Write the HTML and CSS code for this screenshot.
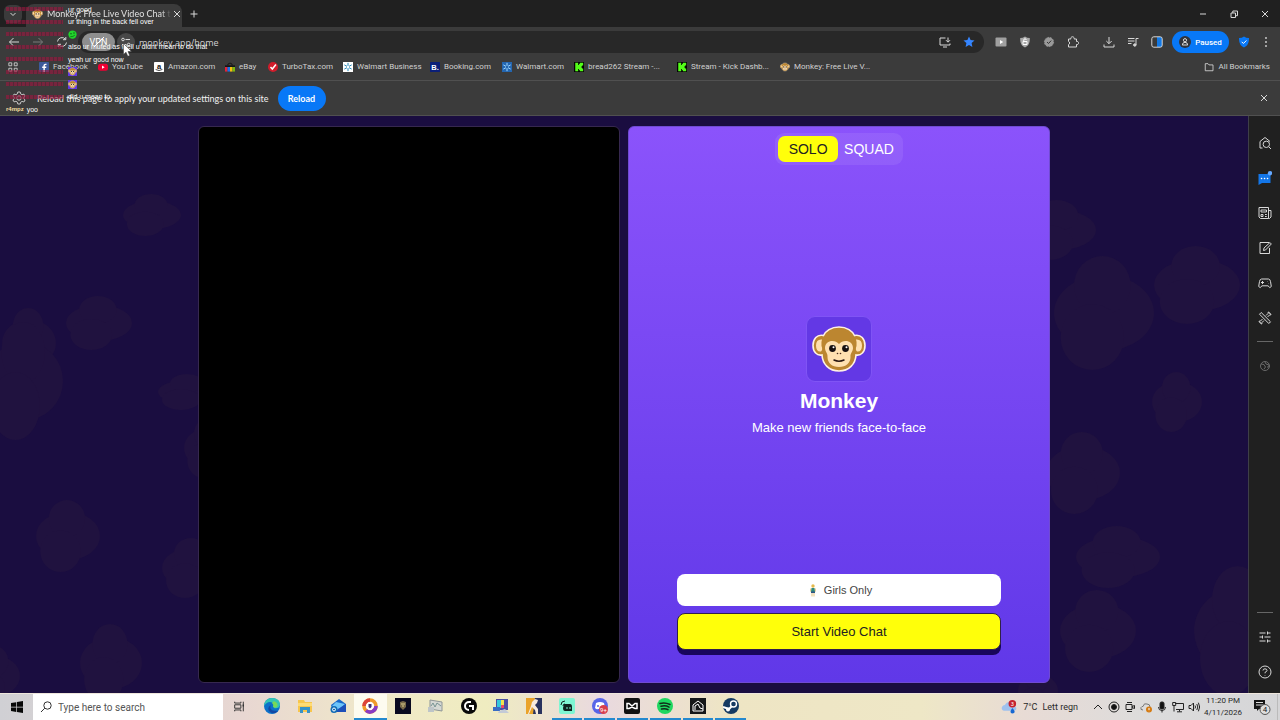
FILE: index.html
```html
<!DOCTYPE html>
<html lang="en">
<head>
    <meta charset="UTF-8">
    <meta name="viewport" content="width=device-width, initial-scale=1.0">
    <title>Monkey: Free Live Video Chat</title>
    <link rel="stylesheet" href="styles.css">
</head>
<body>

    <!-- shared symbols -->
    <svg class="defs" aria-hidden="true">
        <symbol id="monkey" viewBox="0 0 54 46">
            <path d="M27 1C19 1 13.500 5 11.500 9.500C5 8 1 13 1 19.500C1 26 5 30 10 29C10.500 38 17 45 27 45C37 45 43.500 38 44 29C49 30 53 26 53 19.500C53 13 49 8 42.500 9.500C40.500 5 35 1 27 1Z" fill="#bc8630" stroke="#fff1e4" stroke-width="1.600"/>
            <path d="M10 13.500Q4 13 4 19.500T9 25.500Q11 24 9.500 20Q9 16 10 13.500Z" fill="#ffe0b0"/>
            <path d="M44 13.500Q50 13 50 19.500T45 25.500Q43 24 44.500 20Q45 16 44 13.500Z" fill="#ffe0b0"/>
            <path d="M27 18C23 13 13 14 13 22C13 26 16 27 15.500 31C15.500 37 20 41 27 41C34 41 38.500 37 38.500 31C38 27 41 26 41 22C41 14 31 13 27 18Z" fill="#ffe0b0"/>
            <circle cx="20.500" cy="22.500" r="3.400" fill="#171010"/>
            <circle cx="33.500" cy="22.500" r="3.400" fill="#171010"/>
            <circle cx="21.500" cy="21.300" r="1" fill="#fff"/>
            <circle cx="34.500" cy="21.300" r="1" fill="#fff"/>
            <circle cx="25.500" cy="27.500" r=".8" fill="#4a2c1c"/>
            <circle cx="28.500" cy="27.500" r=".8" fill="#4a2c1c"/>
            <path d="M22 34Q27 36.500 32 34" fill="none" stroke="#2a1712" stroke-width="1.500" stroke-linecap="round"/>
        </symbol>
        <symbol id="close" viewBox="0 0 12 12"><path d="M3 3l6 6M9 3l-6 6"/></symbol>
        <symbol id="kick" viewBox="0 0 12 12">
            <rect width="12" height="12" fill="#050505"/>
            <path d="M1.500 1h3.500v2.500h1V2.200h1.200V1H11v3.300H9.700v1H8.700v1.400h1v1H11V11H7.200V9.800H6V8.500H5V11H1.500Z" fill="#53fc18"/>
        </symbol>
        <symbol id="spark" viewBox="0 0 12 12">
            <path d="M6 1.500v2.700M6 7.800v2.700M2 3.700L4.400 5M7.600 7L10 8.300M2 8.300L4.400 7M7.600 5L10 3.700" fill="none" stroke-width="1.200" stroke-linecap="round"/>
        </symbol>
        <symbol id="blob" viewBox="0 0 60 66" preserveAspectRatio="none">
            <ellipse cx="30" cy="33" rx="30" ry="22"/>
            <circle cx="29" cy="17" r="17"/>
            <circle cx="23" cy="47" r="19"/>
        </symbol>
    </svg>

    <header class="tab-strip">
        <button class="tab-search" aria-label="Search tabs"><svg viewBox="0 0 12 12"><path d="M3.500 5L6 7.500L8.500 5"/></svg></button>
        <div class="tab">
            <svg class="favicon"><use href="#monkey"/></svg>
            <span class="tab-title">Monkey: Free Live Video Chat t</span>
            <button aria-label="Close tab"><svg><use href="#close"/></svg></button>
        </div>
        <button class="new-tab" aria-label="New tab"><svg viewBox="0 0 12 12"><path d="M6 2.500v7M2.500 6h7"/></svg></button>
        <div class="window-buttons">
            <button aria-label="Minimize"><svg viewBox="0 0 12 12"><path d="M3 6h6"/></svg></button>
            <button aria-label="Restore"><svg viewBox="0 0 12 12"><path d="M3 5h4.500v4.500H3ZM4.800 5V3h4.700v4.700H7.500"/></svg></button>
            <button aria-label="Close"><svg><use href="#close"/></svg></button>
        </div>
    </header>

    <nav class="toolbar">
        <button aria-label="Back"><svg viewBox="0 0 12 12"><path d="M11 6H1.500M5.500 2L1.500 6l4 4"/></svg></button>
        <button class="disabled" aria-label="Forward"><svg viewBox="0 0 12 12"><path d="M1 6h9.500M6.500 2l4 4l-4 4"/></svg></button>
        <button aria-label="Reload"><svg viewBox="0 0 12 12"><path d="M1.500 5.500A4.500 4.500 0 0 1 9.500 3.300M9.800 1v2.700H7M10.500 6.500A4.500 4.500 0 0 1 2.500 8.700M2.200 11V8.300H5"/></svg></button>
        <div class="omnibox">
            <button class="vpn">VPN<svg viewBox="0 0 12 12"><path d="M1 11L11 1"/></svg></button>
            <button class="site-info" aria-label="Site information"><svg viewBox="0 0 12 12"><path d="M5.500 3.500H10M2 8.500h4.500"/><circle cx="3" cy="3.500" r="1.300"/><circle cx="8.700" cy="8.500" r="1.300"/></svg></button>
            <input type="text" aria-label="Address" value="monkey.app/home">
            <button aria-label="Install"><svg viewBox="0 0 12 12"><path d="M6.500 2H1v7h10V7.500M4 11h4M9 1.500v4.500M7 4.200L9 6.200l2-2"/></svg></button>
            <button aria-label="Bookmark"><svg viewBox="0 0 12 12"><path d="M6 .5l1.600 3.600l3.900.4l-2.900 2.600l.8 3.900L6 9l-3.400 2l.8-3.900L.5 4.500l3.900-.4Z" fill="#3585ff" stroke="none"/></svg></button>
        </div>
        <div class="extensions">
            <button aria-label="Video"><svg viewBox="0 0 12 12"><rect x=".5" y="1.500" width="11" height="9" rx="1" fill="#a0a0a0" stroke="none"/><path d="M5 4l3.200 2L5 8Z" fill="#fff" stroke="none"/></svg></button>
            <button aria-label="Ad blocker"><svg viewBox="0 0 12 12"><path d="M6 .5Q8 2 10.800 2C11 7 9.500 10 6 11.500C2.500 10 1 7 1.200 2Q4 2 6 .5Z" fill="#a8a8a8" stroke="none"/><path d="M4 5.500h4V8.500H4ZM4.800 5.500V4a1.200 1.200 0 0 1 2.400 0" stroke="#fff"/></svg></button>
            <button aria-label="Verified"><svg viewBox="0 0 12 12"><circle cx="6" cy="6" r="4.600" fill="#999" stroke="#999" stroke-dasharray="1.600 1.200"/><path d="M4 6l1.500 1.500L8.200 4.600" stroke="#333"/></svg></button>
            <button aria-label="Extensions"><svg viewBox="0 0 12 12"><path d="M1.500 3h2.400a1.700 1.700 0 1 1 3.200 0H9.500v2.500a1.600 1.600 0 1 1 0 3V11H1.500V8.600a1.700 1.700 0 0 0 0-3.200Z"/></svg></button>
        </div>
        <button aria-label="Downloads"><svg viewBox="0 0 12 12"><path d="M6 1v6.500M3.300 5L6 7.700L8.700 5M1 8.500V11h10V8.500"/></svg></button>
        <button aria-label="Playlist"><svg viewBox="0 0 12 12"><path d="M1 2.500h6.500M1 5h6.500M1 7.500h3.500M9 9V2.500h2.500"/><circle cx="7.800" cy="9" r="1.200" fill="#ccc"/></svg></button>
        <button aria-label="Side panel"><svg viewBox="0 0 12 12"><path d="M6 1H11v10H6Z" fill="#1279e6" stroke="none"/><rect x=".8" y=".8" width="10.400" height="10.400" rx="2"/></svg></button>
        <button class="paused"><svg viewBox="0 0 12 12"><circle cx="6" cy="6" r="6" fill="#32343b" stroke="none"/><circle cx="6" cy="4.200" r="1.600"/><path d="M3.300 9Q3.500 6.300 6 6.300T8.700 9Z"/></svg>Paused</button>
        <button aria-label="Secure"><svg viewBox="0 0 12 12"><path d="M6 .5Q8 2 11 2C11 7 9.500 10 6 11.500C2.500 10 1 7 1 2Q4 2 6 .5Z" fill="#0878f7" stroke="none"/><path d="M3.700 5.800l1.700 1.700L8.400 4.500" stroke="#fff"/></svg></button>
        <button aria-label="Menu"><svg viewBox="0 0 12 12"><path d="M6 2v.1M6 6v.1M6 10v.1" stroke-width="1.800" stroke-linecap="round"/></svg></button>
    </nav>

    <nav class="bookmarks">
        <button aria-label="Apps"><svg viewBox="0 0 12 12"><path d="M1 1h3.500v3.500H1ZM7.500 1H11v3.500H7.500ZM1 7.500h3.500V11H1ZM7.500 7.500H11V11H7.500Z"/></svg></button>
        <div class="bookmark-list">
            <a href="#"><svg viewBox="0 0 12 12"><rect width="12" height="12" rx="1" fill="#3c5a9a"/><path d="M7 12V7.300h1.600l.3-1.800H7V4.500q0-.9 1-.9h1V2H7.700Q5.300 2 5.300 4.300v1.200H3.800v1.800h1.500V12Z" fill="#fff"/></svg>Facebook</a>
            <a href="#"><svg viewBox="0 0 12 12"><rect y="2" width="12" height="8.500" rx="3" fill="#f00033"/><path d="M4.800 4.200L8 6.200l-3.200 2Z" fill="#fff"/></svg>YouTube</a>
            <a href="#"><svg viewBox="0 0 12 12"><rect width="12" height="12" rx="1" fill="#fff"/><text class="letter" x="6" y="8.500" fill="#111">a</text><path d="M2 9q4 2.500 8 0" fill="none" stroke="#222"/></svg>Amazon.com</a>
            <a href="#"><svg viewBox="0 0 12 12"><path d="M3.500 4V2.500Q6 0 8.500 2.500V4" fill="none" stroke="#111"/><path d="M0 4h12v2H0Z" fill="#151515"/><path d="M0 6h3v5.500H0Z" fill="#e52238"/><path d="M3 6h3v5.500H3Z" fill="#1871e8"/><path d="M6 6h3v5.500H6Z" fill="#f5bd13"/><path d="M9 6h3v5.500H9Z" fill="#7cb80f"/></svg>eBay</a>
            <a href="#"><svg viewBox="0 0 12 12"><circle cx="6" cy="6" r="6" fill="#d11c2b"/><path d="M3 6l2.200 2.500L9.500 3" fill="none" stroke="#fff" stroke-width="1.800"/></svg>TurboTax.com</a>
            <a href="#"><svg class="spark-light"><use href="#spark"/></svg>Walmart Business</a>
            <a href="#"><svg viewBox="0 0 12 12"><rect width="12" height="12" rx="1" fill="#0b1f78"/><text class="letter" x="6" y="9" fill="#fff">B.</text></svg>Booking.com</a>
            <a href="#"><svg class="spark-blue"><use href="#spark"/></svg>Walmart.com</a>
            <a href="#"><svg><use href="#kick"/></svg>bread262 Stream -...</a>
            <a href="#"><svg><use href="#kick"/></svg>Stream - Kick Dashb...</a>
            <a href="#"><svg><use href="#monkey"/></svg>Monkey: Free Live V...</a>
        </div>
        <button class="all-bookmarks"><svg viewBox="0 0 12 12"><path d="M1.500 2h3.300l1.200 1.500h4.800v7H1.500Z"/></svg>All Bookmarks</button>
    </nav>

    <div class="infobar">
        <svg viewBox="0 0 14 14"><path d="M5.800 1h2.400l.4 1.800l1.500.9l1.800-.6l1.200 2.100L11.800 6.400v1.300l1.300 1.200l-1.200 2.100l-1.800-.6l-1.500.9L8.200 13H5.800l-.4-1.800l-1.500-.9l-1.800.6L.9 8.900l1.300-1.200V6.400L.9 5.200l1.200-2.100l1.800.6l1.500-.9Z"/><circle cx="7" cy="7" r="2.200"/></svg>
        <span>Reload this page to apply your updated settings on this site</span>
        <button class="reload">Reload</button>
        <button class="dismiss" aria-label="Dismiss"><svg><use href="#close"/></svg></button>
    </div>

    <div class="content">
        <main class="page">
            <svg class="pattern" viewBox="0 0 1248 577" preserveAspectRatio="xMidYMid slice" aria-hidden="true">
                <use href="#blob" x="2" y="192" width="54" height="70"/>
                <use href="#blob" x="-14" y="206" width="77" height="118"/>
                <use href="#blob" x="36" y="384" width="64" height="72"/>
                <use href="#blob" x="80" y="508" width="62" height="78"/>
                <use href="#blob" x="-30" y="530" width="50" height="60"/>
                <use href="#blob" x="123" y="78" width="58" height="42"/>
                <use href="#blob" x="66" y="180" width="66" height="54"/>
                <use href="#blob" x="158" y="258" width="60" height="36"/>
                <use href="#blob" x="184" y="302" width="50" height="60"/>
                <use href="#blob" x="162" y="422" width="60" height="60"/>
                <use href="#blob" x="1054" y="140" width="100" height="114"/>
                <use href="#blob" x="1020" y="84" width="76" height="60"/>
                <use href="#blob" x="1154" y="130" width="86" height="78"/>
                <use href="#blob" x="1152" y="256" width="50" height="60"/>
                <use href="#blob" x="1046" y="316" width="74" height="82"/>
                <use href="#blob" x="1076" y="410" width="84" height="62"/>
                <use href="#blob" x="1060" y="474" width="76" height="82"/>
                <use href="#blob" x="1194" y="450" width="90" height="130"/>
                <use href="#blob" x="1018" y="550" width="40" height="50"/>
            </svg>
            <section class="camera"></section>
            <section class="card">
                <div class="mode-switch">
                    <button class="mode selected">SOLO</button>
                    <button class="mode">SQUAD</button>
                </div>
                <div class="brand">
                    <div class="logo"><svg><use href="#monkey"/></svg></div>
                    <h1>Monkey</h1>
                    <p>Make new friends face-to-face</p>
                </div>
                <div class="actions">
                    <button class="girls-only">
                        <svg viewBox="0 0 6 13"><circle cx="3" cy="2" r="1.700" fill="#e5b94c"/><path d="M1.500 4h3l.7 4H.8Z" fill="#2d8a80"/><path d="M1 7.500h4V9H1Z" fill="#2e5584"/><path d="M2 9v3.500M4 9v3.500M.7 4.500v3M5.300 4.500v3" stroke="#e2bd6f" stroke-width=".9"/></svg>
                        Girls Only
                    </button>
                    <button class="start">Start Video Chat</button>
                </div>
            </section>
        </main>

        <aside class="sidebar">
            <button aria-label="Search"><svg viewBox="0 0 14 14"><path d="M4.500 12H2V5.500L7 1.500l5 4M11 11l2 2"/><circle cx="8.300" cy="8.300" r="3.200"/></svg></button>
            <button aria-label="Chat"><svg viewBox="0 0 14 14"><path d="M.5 3h12v9H4L.5 14Z" fill="#1376e8" stroke="none"/><path d="M3.500 7.500h.1M6.500 7.500h.1M9.500 7.500h.1" stroke="#fff" stroke-width="1.500" stroke-linecap="round"/><circle cx="12" cy="2.200" r="2.200" fill="#65a8ff" stroke="none"/></svg></button>
            <button aria-label="News"><svg viewBox="0 0 14 14"><path d="M1 1.500h9.500v11H2.500L1 11ZM10.500 4.500H13V11l-1.500 1.500h-1M3 4h5.500v2H3ZM3 8.500h2v2H3ZM7 8.500h1.800M7 10.500h1.800"/></svg></button>
            <button aria-label="Notes"><svg viewBox="0 0 14 14"><path d="M11.500 7v5.500H2v-11h9M5.500 9.500l.5-2.500l6-5.500l1.300 1.500L7.500 9Z"/></svg></button>
            <button aria-label="Games"><svg viewBox="0 0 14 14"><path d="M3.500 3h7Q12 3 12.500 5.500L13.300 10.500Q12 13 10 9.800H4Q2 13 .7 10.500L1.500 5.500Q2 3 3.500 3ZM4.500 5v3M3 6.500h3M9 5.500h.3M10.500 7.500h.3"/></svg></button>
            <button aria-label="Tools"><svg viewBox="0 0 14 14"><path d="M1.500 3.200L3.200 1.500L12.500 10.800L10.800 12.500ZM8 4.500L10 2.500Q9.500 1 11 1L11.500 2.500L13 3Q13 4.500 11.500 4L9.500 6M4.500 8L2.500 10Q1 9.500 1 11L2.500 11.500L3 13Q4.500 13 4 11.500L6 9.500"/></svg></button>
            <hr>
            <button class="faded" aria-label="Web"><svg viewBox="0 0 14 14"><circle cx="7" cy="7" r="4.500"/><path d="M3 5l3 .5L7.500 8L6 10M7 3l1 2l3 1v2L9 8"/></svg></button>
            <hr class="bottom">
            <button aria-label="Customize"><svg viewBox="0 0 14 14"><path d="M1.500 3h6M9.500 1.500v3M9.500 3h3M1.500 7h3M4.500 5.500v3M6.500 7h6M1.500 11h6M9.500 9.500v3M9.500 11h3"/></svg></button>
            <button aria-label="Help"><svg viewBox="0 0 14 14"><circle cx="7" cy="7" r="6"/><path d="M5 5.500Q5 3.800 7 3.800T9 5.500Q9 6.500 7 7.400V8.300M7 10v.5"/></svg></button>
        </aside>
    </div>

    <footer class="taskbar">
        <button class="start-menu" aria-label="Start"><svg viewBox="0 0 12 12"><path d="M0 2l5.300-.8v4.500H0ZM6 1.100L12 0v5.700H6ZM0 6.400h5.300v4.500L0 10.100ZM6 6.400h6V12l-6-1Z" fill="#080808"/></svg></button>
        <label class="search">
            <svg viewBox="0 0 12 12"><circle cx="7.500" cy="4.500" r="3.700"/><path d="M4.800 7.200L1 11"/></svg>
            <input type="text" aria-label="Search" placeholder="Type here to search">
        </label>
        <div class="apps">
            <button aria-label="Task view"><svg class="small" viewBox="0 0 16 16"><path d="M1 1v2h9V1M1 15v-2h9v2M1 5.500h9v5H1ZM13.500 1v14" fill="none" stroke="#333" stroke-width="1.400"/><path d="M12.500 5h2v3h-2Z" fill="#333"/></svg></button>
            <button aria-label="Edge"><svg viewBox="0 0 16 16"><circle cx="8" cy="8" r="8" fill="#0b70c9"/><path d="M0 8Q1 0 8 0q8 0 8 7q-1 4-6 3q2-3-1-5Q4 2 0 8Z" fill="#34c5b5"/><path d="M10 3q5 2 3 6q-3 1.500-4-.3q1-2.200-1-3.700Z" fill="#76d95a"/><path d="M7 7q-3 6 7 6q-4 4-8 1Q2 10 7 7Z" fill="#1148a5"/></svg></button>
            <button aria-label="Explorer"><svg viewBox="0 0 16 16"><path d="M1 2h6l1 2h7v10H1Z" fill="#f7c64d"/><path d="M1 5h14v3H1Z" fill="#ffdc76"/><path d="M3 9h10v6h-3v-3H6v3H3Z" fill="#3792c9"/></svg></button>
            <button aria-label="Mail"><svg viewBox="0 0 16 16"><path d="M1 7l8-6l7 5v8H3Z" fill="#1767c8"/><path d="M6 4l9 2l-7 6l-6-4Z" fill="#6cc4fa"/><path d="M8 11l8-5v8H6Z" fill="#1c4fb9"/><circle cx="4" cy="11.500" r="3.500" fill="#116cb5"/><circle cx="4" cy="11.500" r="1.500" fill="none" stroke="#fff"/></svg></button>
            <button class="active" aria-label="Browser"><svg viewBox="0 0 16 16"><circle cx="8" cy="8" r="6" fill="#fff" stroke="#f09b2b" stroke-width="3.500"/><path d="M2 8A6 6 0 0 1 8 2" fill="none" stroke="#dc433b" stroke-width="3.500"/><path d="M14 8A6 6 0 0 1 4 12.500" fill="none" stroke="#8a3bc4" stroke-width="3.500"/><path d="M6.500 6h3v3L8 10.500L6.500 9Z" fill="#433077"/></svg></button>
            <button aria-label="Game"><svg viewBox="0 0 16 16"><path d="M0 0h16v16H0Z" fill="#09091f"/><path d="M5 4l3-1l3 1v5l-3 3l-3-3Z" fill="#776848"/><path d="M6 6h4M7 8h2" stroke="#d8ca8b"/></svg></button>
            <button aria-label="System"><svg viewBox="0 0 16 16"><path d="M2 2l12 2v9L2 11Z" fill="#d5d8d3" stroke="#8f9697"/><path d="M3 8l2-3l2 4l2-4l4 3" fill="none" stroke="#779393"/><path d="M0 9h6v5H0Z" fill="#bec5c8"/></svg></button>
            <button aria-label="G Hub"><svg viewBox="0 0 16 16"><circle cx="8" cy="8" r="8" fill="#0a0a0a"/><path d="M10 4H8a4 4 0 1 0 0 8M8 8h4v4" fill="none" stroke="#fff" stroke-width="2"/></svg></button>
            <button aria-label="Display"><svg viewBox="0 0 16 16"><path d="M3 1h12v11H3Z" fill="#4a50a3"/><path d="M4 2h4v8H4Z" fill="#35c8dc"/><path d="M8 2h3v5H8Z" fill="#f1e34d"/><path d="M8 7h3v3H8Z" fill="#e74b65"/><path d="M0 9h7v4H0Z" fill="#386dc4"/><path d="M6 13l6-2l4 4H5Z" fill="#c3cad6"/></svg></button>
            <button aria-label="Counter-Strike"><svg viewBox="0 0 16 16"><path d="M0 0h16v16H0Z" fill="#eaa32a"/><path d="M9 0h7v16H7Z" fill="#29325e"/><path d="M9 1l3 1l-1 3l-2 2l3 4v5h-2l-1-4l-3-3l-3 7H2l3-8l1-4Z" fill="#f8eadd"/></svg></button>
            <button class="running" aria-label="Streamlabs"><svg viewBox="0 0 16 16"><rect width="16" height="16" rx="2" fill="#80f5d2"/><path d="M5 6h6q2 0 2 3v4H6q-2 0-2-3Z" fill="#10231f"/><path d="M2 7q0-4 4-4M4 8q0-2 2-2" fill="none" stroke="#10231f"/><path d="M8 9v2M11 9v2" stroke="#80f5d2"/></svg></button>
            <button class="running" aria-label="Discord"><svg viewBox="0 0 16 16"><circle cx="8" cy="8" r="8" fill="#5865e8"/><path d="M4 5q4-2 8 0l1 5q-2 2-3 1H6q-1 1-3-1Z" fill="#fff"/><circle cx="6" cy="8" r="1" fill="#5865e8"/><circle cx="11.500" cy="11.500" r="4.500" fill="#d93e4c"/><text class="badge" x="11.500" y="13.500">9+</text></svg></button>
            <button class="running" aria-label="Medal"><svg viewBox="0 0 16 16"><rect width="16" height="16" rx="2" fill="#111"/><path d="M3 10.500V5.500h2L8 8l3-2.500h2v5h-2L8 9l-3 1.500Z" fill="none" stroke="#fff" stroke-width="1.500"/></svg></button>
            <button class="running" aria-label="Spotify"><svg viewBox="0 0 16 16"><circle cx="8" cy="8" r="8" fill="#1ed760"/><path d="M3 5.500q5-1.500 10 1M4 8.300q4.500-1.300 8 .8M4.500 11q4-1 6.500.7" fill="none" stroke="#102b19" stroke-width="1.500" stroke-linecap="round"/></svg></button>
            <button class="running" aria-label="Utility"><svg viewBox="0 0 16 16"><path d="M0 0h16v16H0Z" fill="#151719"/><path d="M3 13V7l5-4l5 4v6ZM5 12V8l3-2l2 4l3 1" fill="none" stroke="#fff"/></svg></button>
            <button class="running" aria-label="Steam"><svg viewBox="0 0 16 16"><circle cx="8" cy="8" r="8" fill="#153a62"/><path d="M0 9l6 2l3-3" fill="none" stroke="#fff" stroke-width="2"/><circle cx="10.500" cy="6" r="3" fill="#153a62" stroke="#fff" stroke-width="1.400"/><circle cx="5" cy="11.500" r="2" fill="#fff"/></svg></button>
        </div>
        <div class="weather">
            <svg viewBox="0 0 18 16"><path d="M3 12q-3-1-2-4q1-2 3-2q2-4 6-3q4 0 4 4q3 1 2 4q-1 1-3 1Z" fill="#9fc1ee"/><path d="M12 9q5 5 0 6q-4-1 0-6Z" fill="#1768d2"/><circle cx="12" cy="4.500" r="4" fill="#c5222f"/><text class="badge" x="12" y="6.500">3</text></svg>
            <span>7°C</span>
            <span>Lett regn</span>
        </div>
        <div class="tray">
            <svg viewBox="0 0 12 12"><path d="M2 8l4-4l4 4"/></svg>
            <svg viewBox="0 0 12 12"><circle cx="6" cy="6" r="5"/><circle cx="6" cy="6" r="2.500" fill="#111"/></svg>
            <svg viewBox="0 0 12 12"><path d="M2 3.500h6v5H2ZM8 5.500l2.500-1v3L8 6.500M3 1.500h5M3 10.500h5"/></svg>
            <svg viewBox="0 0 12 12"><path d="M3 9Q0 9 1 6.500Q2 5 3 5.500Q4 1.500 7 3q3 0 3 3" stroke="#777"/><circle cx="9" cy="8.500" r="3" fill="#d57b12" stroke="none"/><path d="M9 7v2M9 9.800v.3" stroke="#fff"/></svg>
            <svg viewBox="0 0 12 12"><rect x="4" y="1" width="4" height="7" rx="1.500" fill="#111"/><path d="M2.500 6q0 3.500 3.500 3.500T9.500 6M6 9.500v2"/></svg>
            <svg viewBox="0 0 12 12"><path d="M3 2.500h8.500v6H4M5 10.800h5M7.500 8.500v2M.7 1.500h3v3h-3ZM2 4.500v6"/></svg>
            <svg viewBox="0 0 12 12"><path d="M1 4.500h2L5.500 2v8L3 7.500H1ZM7 4.500q1 1.500 0 3M8.800 3q2 3 0 6M10.400 1.700q2.500 4.300 0 8.600"/></svg>
        </div>
        <div class="clock"><span>11:20 PM</span><span>4/11/2026</span></div>
        <button class="notifications" aria-label="Notifications"><svg viewBox="0 0 18 16"><path d="M1 1h11v9H6l-2 2v-2H1Z" fill="#151515"/><path d="M3 3.500h7M3 6h7" stroke="#ddd"/><circle cx="12" cy="10.500" r="5" fill="#ddd" stroke="#555"/><text class="count" x="12" y="13.200">4</text></svg></button>
    </footer>

    <!-- stream chat sits on top of the whole desktop -->
    <div class="chat-overlay">
        <div class="chat-line"><i class="user"></i>ur good</div>
        <div class="chat-line"><i class="user"></i>ur thing in the back fell over</div>
        <div class="chat-line"><i class="user"></i><svg viewBox="0 0 12 12"><circle cx="6" cy="6" r="5.500" fill="#20d52b"/><circle cx="4" cy="5" r="1" fill="#115d17"/><circle cx="8" cy="4" r="1" fill="#115d17"/><path d="M3 9q4 0 6-2" fill="none" stroke="#115d17"/></svg></div>
        <div class="chat-line"><i class="user"></i>also ur muted as well u didnt mean to do that</div>
        <div class="chat-line"><i class="user"></i>yeah ur good now</div>
        <div class="chat-line"><i class="user"></i><svg class="emote"><use href="#monkey"/></svg></div>
        <div class="chat-line"><i class="user"></i><svg class="emote"><use href="#monkey"/></svg></div>
        <div class="chat-line"><i class="user"></i>did u mean to</div>
        <div class="chat-line"><b>r4mpz</b>yoo</div>
    </div>
    <svg class="cursor" viewBox="0 0 9 14" aria-hidden="true"><path d="M.5.5v11l2.500-2.300l1.800 4.100l1.900-.8L5 8.500h3.500Z" fill="#fff" stroke="#333" stroke-width=".5"/></svg>

</body>
</html>
```
FILE: styles.css
```css
* {
    box-sizing: border-box;
}
body {
    margin: 0;
    min-height: 100vh;
    display: flex;
    flex-direction: column;
    position: relative;
    overflow: hidden;
    font-family: "Segoe UI", Roboto, sans-serif;
    font-size: 8px;
    color: #e0e0e0;
    background-color: #1a0d40;
}
button, input {
    font: inherit;
    color: inherit;
    border: none;
    background: none;
    padding: 0;
    margin: 0;
}
button {
    display: flex;
    align-items: center;
    justify-content: center;
    cursor: pointer;
    flex-shrink: 0;
}
svg {
    display: block;
    flex-shrink: 0;
}
.defs {
    position: absolute;
    width: 0;
    height: 0;
}

/* browser chrome */
.tab-strip {
    height: 27px;
    display: flex;
    align-items: center;
    background-color: #202020;
    padding-left: 4px;
}
.tab-strip svg, .toolbar svg, .bookmarks svg, .dismiss svg {
    width: 12px;
    height: 12px;
    fill: none;
    stroke: #d8d8d8;
}
.tab-search {
    width: 18px;
    height: 18px;
    border-radius: 6px;
    background-color: #3b3b3b;
}
.tab {
    align-self: flex-end;
    height: 23px;
    width: 156px;
    margin-left: 4px;
    padding: 0 5px 4px 6px;
    display: flex;
    align-items: center;
    gap: 4px;
    border-radius: 8px 8px 0 0;
    background-color: #3b3b3b;
}
.tab .favicon {
    width: 11px;
    stroke: none;
}
.tab-title {
    flex: 1;
    white-space: nowrap;
    font-family: "Segoe UI", Lato, sans-serif;
    font-size: 9px;
    -webkit-mask-image: linear-gradient(to right, #000 92%, transparent);
}
.tab button {
    margin-left: -4px;
}
.new-tab {
    width: 24px;
    height: 24px;
}
.window-buttons {
    margin-left: auto;
    display: flex;
}
.window-buttons button {
    width: 31px;
    height: 27px;
}
.toolbar {
    height: 30px;
    display: flex;
    align-items: center;
    background-color: #3b3b3b;
    padding: 0 4px 0 2px;
}
.toolbar > button {
    width: 24px;
    height: 24px;
}
.toolbar > .disabled {
    opacity: 0.4;
}
.toolbar > button:last-child {
    width: 20px;
}
.omnibox {
    flex: 1;
    height: 22px;
    margin-left: 4px;
    padding: 0 4px;
    display: flex;
    align-items: center;
    gap: 2px;
    border-radius: 11px;
    background-color: #282828;
}
.omnibox input {
    flex: 1;
    min-width: 0;
    margin-left: 2px;
    font-family: "Segoe UI", "Open Sans", sans-serif;
    font-size: 9px;
    color: #d0d0d0;
}
.omnibox > button {
    width: 22px;
    height: 18px;
}
.omnibox > .vpn {
    width: 33px;
    border-radius: 9px;
    background-color: #8e8e8e;
    color: #fff;
    font-size: 9px;
    position: relative;
}
.vpn svg {
    position: absolute;
    stroke: #fff;
}
.omnibox > .site-info {
    width: 18px;
    border-radius: 50%;
    background-color: #484848;
}
.extensions {
    display: flex;
    margin: 0 12px 0 5px;
}
.extensions button {
    width: 24px;
    height: 24px;
}
.toolbar > .paused {
    width: 57px;
    height: 22px;
    margin: 0 3px;
    gap: 4px;
    border-radius: 11px;
    background-color: #0878f7;
    color: #fff;
    font-weight: 500;
}
.bookmarks {
    height: 24px;
    display: flex;
    align-items: center;
    background-color: #3b3b3b;
    border-bottom: 1px solid #505050;
    padding: 0 10px 4px 8px;
    color: #d0d0d0;
}
.bookmarks svg {
    width: 10px;
    height: 10px;
}
.bookmark-list {
    flex: 1;
    display: grid;
    grid-template-columns: 59px 56px 71px 43px 75px 87px 72px 72px 103px 103px 100px;
    margin-left: 21px;
}
.bookmark-list a {
    display: flex;
    align-items: center;
    gap: 4px;
    color: inherit;
    text-decoration: none;
    white-space: nowrap;
}
.bookmark-list svg {
    stroke: none;
}
.bookmark-list .spark-light {
    background-color: #fff;
    stroke: #2387b8;
}
.bookmark-list .spark-blue {
    background-color: #2466b0;
    stroke: #9dd7ff;
}
.letter {
    font-family: "Liberation Sans", sans-serif;
    font-size: 9px;
    font-weight: bold;
    text-anchor: middle;
}
.all-bookmarks {
    gap: 4px;
}
.infobar {
    height: 35px;
    display: flex;
    align-items: center;
    background-color: #3b3b3b;
    border-bottom: 1px solid #505050;
    padding: 0 6px 0 12px;
    font-family: "Segoe UI", Lato, sans-serif;
    font-size: 9px;
    color: #f0f0f0;
}
.infobar > svg {
    width: 14px;
    height: 14px;
    fill: none;
    stroke: #c8c8c8;
    margin-right: 11px;
}
.reload {
    width: 48px;
    height: 25px;
    margin-left: 9px;
    border-radius: 13px;
    background-color: #0878f7;
    color: #fff;
    font-weight: bold;
}
.dismiss {
    width: 20px;
    height: 20px;
    margin-left: auto;
}

/* page */
.content {
    flex: 1;
    display: flex;
}
.page {
    flex: 1;
    display: flex;
    justify-content: center;
    gap: 8px;
    padding: 10px;
    position: relative;
    font-family: "Liberation Sans", Arial, sans-serif;
    font-size: 13px;
}
.pattern {
    position: absolute;
    top: 0;
    left: 0;
    width: 100%;
    height: 100%;
    fill: #20123f;
}
.camera, .card {
    flex: 1;
    max-width: 422px;
    border: 1px solid #36284f;
    border-radius: 6px;
    position: relative;
}
.camera {
    background-color: #000;
}
.card {
    display: flex;
    flex-direction: column;
    align-items: center;
    justify-content: space-between;
    padding: 6px 48px 28px;
    border-color: #704bd2;
    background: linear-gradient(#8b53fb, #6038e8);
    color: #fff;
}
.mode-switch {
    display: flex;
    padding: 3px;
    border-radius: 9px;
    background-color: rgba(255, 255, 255, 0.08);
}
.mode {
    height: 26px;
    padding: 0 6px;
    border-radius: 7px;
    font-size: 14px;
}
.mode.selected {
    width: 60px;
    background-color: #ffff0a;
    color: #222;
}
.brand {
    text-align: center;
    margin-top: 12px;
}
.logo {
    width: 66px;
    height: 66px;
    margin: 0 auto;
    display: flex;
    align-items: center;
    justify-content: center;
    border: 1px solid #8054f5;
    border-radius: 9px;
    background-color: #6338e5;
}
.logo svg {
    width: 54px;
    height: 46px;
}
.brand h1 {
    margin: 6px 0;
    font-size: 21px;
    line-height: 26px;
}
.brand p {
    margin: 0;
    line-height: 16px;
}
.actions {
    align-self: stretch;
    display: flex;
    flex-direction: column;
    gap: 7px;
}
.girls-only {
    height: 32px;
    gap: 8px;
    padding-left: 4px;
    border-radius: 8px;
    background-color: #fff;
    color: #444;
    font-size: 11px;
}
.girls-only svg {
    width: 6px;
    height: 13px;
}
.start {
    height: 37px;
    margin-bottom: 4px;
    border: 1px solid #30204a;
    border-radius: 8px;
    background-color: #ffff0a;
    color: #222;
    box-shadow: 0 5px 0 #18065b;
}
.sidebar {
    width: 32px;
    display: flex;
    flex-direction: column;
    align-items: center;
    background-color: #202020;
    border-left: 1px solid #3e3e48;
    padding: 9px 0 4px;
}
.sidebar button {
    width: 32px;
    height: 35px;
}
.sidebar svg {
    width: 14px;
    height: 14px;
    fill: none;
    stroke: #d8d8d8;
}
.sidebar hr {
    width: 16px;
    margin: 6px 0;
    border: none;
    border-top: 1px solid #666;
}
.sidebar .bottom {
    margin-top: auto;
}
.sidebar .faded {
    opacity: 0.4;
}

/* windows taskbar */
.taskbar {
    height: 27px;
    display: flex;
    border-top: 1px solid #eee6dc;
    background: linear-gradient(to right, #d0d0d4 0, #e8d7d2 19%, #f0e9c8 30%, #efecc0 38%, #e9d9df 47%, #eee5c4 57%, #eee7c6 72%, #e8dbd5 80%, #dcdcdc 90%, #d5d5d7);
    color: #292929;
}
.start-menu {
    width: 33px;
}
.start-menu svg {
    width: 12px;
    height: 12px;
}
.search {
    width: 190px;
    display: flex;
    align-items: center;
    gap: 6px;
    padding: 0 7px;
    background-color: #fff;
}
.search svg {
    width: 12px;
    height: 12px;
    fill: none;
    stroke: #333;
}
.search input {
    flex: 1;
    min-width: 0;
    font-size: 10px;
}
.search input::placeholder {
    color: #555;
    opacity: 1;
}
.apps {
    width: 524px;
    display: flex;
}
.apps button {
    flex: 1;
    border-bottom: 2px solid transparent;
}
.apps svg {
    width: 16px;
    height: 16px;
}
.apps .small {
    width: 11px;
    height: 11px;
}
.apps .running, .apps .active {
    border-bottom-color: #2489cf;
    background-clip: padding-box;
}
.apps .running {
    border-image: linear-gradient(to right, transparent 10%, #2489cf 10%, #2489cf 90%, transparent 90%) 2;
}
.apps .active {
    background-color: #fdfbef;
}
.badge, .count {
    font-size: 6px;
    text-anchor: middle;
    fill: #fff;
}
.count {
    font-size: 8px;
    fill: #222;
}
.weather {
    margin-left: auto;
    display: flex;
    align-items: center;
    gap: 5px;
    font-size: 9px;
}
.weather svg {
    width: 17px;
    height: 16px;
}
.tray {
    display: flex;
    align-items: center;
    gap: 4px;
    margin-left: 14px;
}
.tray svg {
    width: 12px;
    height: 12px;
    fill: none;
    stroke: #222;
}
.clock {
    width: 46px;
    display: flex;
    flex-direction: column;
    align-items: center;
    justify-content: center;
    line-height: 12px;
}
.notifications {
    width: 32px;
    border-right: 1px solid #bbb;
    margin-right: 2px;
}
.notifications svg {
    width: 18px;
    height: 16px;
}

/* overlay */
.chat-overlay {
    position: absolute;
    top: 3px;
    left: 6px;
    font-family: "Liberation Sans", Arial, sans-serif;
    font-size: 7px;
    color: #fff;
    pointer-events: none;
}
.chat-line {
    height: 12px;
    display: flex;
    align-items: center;
    white-space: nowrap;
}
.chat-line:nth-child(even) {
    height: 13px;
}
.chat-line .user {
    width: 57px;
    height: 4px;
    margin-right: 5px;
    background: repeating-linear-gradient(to right, #a0153f 0, #a0153f 3px, #661c34 3px, #661c34 4px);
    opacity: 0.6;
}
.chat-line b {
    margin-right: 3px;
    font-size: 6px;
    color: #f5dfa0;
}
.chat-line svg {
    width: 9px;
    height: 9px;
}
.chat-line .emote {
    background-color: #6338e5;
}
.cursor {
    position: absolute;
    top: 43px;
    left: 123px;
    width: 9px;
    height: 14px;
    pointer-events: none;
}
```
